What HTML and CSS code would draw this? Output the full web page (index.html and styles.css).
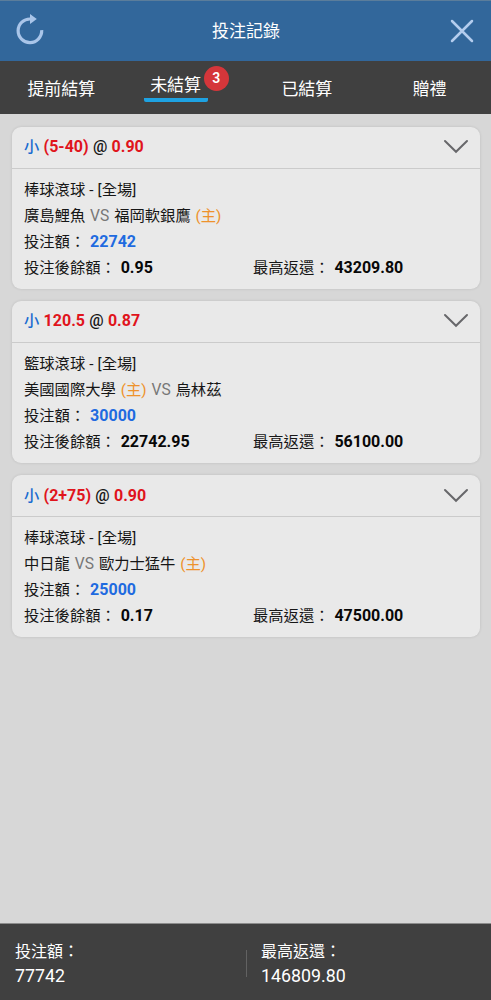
FILE: index.html
```html
<!DOCTYPE html>
<html lang="zh-Hant">
<head>
<meta charset="utf-8">
<title>投注記錄</title>
<link rel="stylesheet" href="styles.css">
</head>
<body>
<div class="app">
  <header class="topbar">
    <svg class="icon-refresh" width="30" height="32" viewBox="0 0 30 32"><path d="M26.7 16.2A11.8 11.8 0 1 1 15.5 5" fill="none" stroke="#a9c5e9" stroke-width="3.2"/><path d="M15 0L21.8 5L15 10Z" fill="#a9c5e9"/></svg>
    <h1 class="title">投注記錄</h1>
    <svg class="icon-close" width="24" height="24" viewBox="0 0 24 24"><path d="M2 2L22 22M22 2L2 22" fill="none" stroke="#b4cdee" stroke-width="2.5" stroke-linecap="round"/></svg>
  </header>
  <nav class="tabs">
    <div class="tab">提前結算</div>
    <div class="tab tab-active"><span class="tab-label">未結算</span><span class="badge">3</span></div>
    <div class="tab">已結算</div>
    <div class="tab">贈禮</div>
  </nav>
  <main class="list">
    <section class="card">
      <div class="card-head"><div class="pick"><span class="side">小</span> <b class="odds">(5-40)</b> <span class="at">@</span> <b class="odds">0.90</b></div>
        <svg width="26" height="16" viewBox="0 0 26 16"><path d="M2 2L13 12.8L24 2" class="chevron"/></svg></div>
      <div class="card-body">
        <div class="line league">棒球滾球 - [全場]</div>
        <div class="line">廣島鯉魚 <span class="vs">VS</span> 福岡軟銀鷹 <span class="home">(主)</span></div>
        <div class="line">投注額： <b class="stake">22742</b></div>
        <div class="line pair"><div>投注後餘額： <b>0.95</b></div><div>最高返還： <b>43209.80</b></div></div>
      </div>
    </section>
    <section class="card">
      <div class="card-head"><div class="pick"><span class="side">小</span> <b class="odds">120.5</b> <span class="at">@</span> <b class="odds">0.87</b></div>
        <svg width="26" height="16" viewBox="0 0 26 16"><path d="M2 2L13 12.8L24 2" class="chevron"/></svg></div>
      <div class="card-body">
        <div class="line league">籃球滾球 - [全場]</div>
        <div class="line">美國國際大學 <span class="home">(主)</span> <span class="vs">VS</span> 烏林茲</div>
        <div class="line">投注額： <b class="stake">30000</b></div>
        <div class="line pair"><div>投注後餘額： <b>22742.95</b></div><div>最高返還： <b>56100.00</b></div></div>
      </div>
    </section>
    <section class="card">
      <div class="card-head"><div class="pick"><span class="side">小</span> <b class="odds">(2+75)</b> <span class="at">@</span> <b class="odds">0.90</b></div>
        <svg width="26" height="16" viewBox="0 0 26 16"><path d="M2 2L13 12.8L24 2" class="chevron"/></svg></div>
      <div class="card-body">
        <div class="line league">棒球滾球 - [全場]</div>
        <div class="line">中日龍 <span class="vs">VS</span> 歐力士猛牛 <span class="home">(主)</span></div>
        <div class="line">投注額： <b class="stake">25000</b></div>
        <div class="line pair"><div>投注後餘額： <b>0.17</b></div><div>最高返還： <b>47500.00</b></div></div>
      </div>
    </section>
  </main>
  <footer class="summary">
    <div class="total"><div class="total-label">投注額：</div><div class="total-value">77742</div></div>
    <div class="divider"></div>
    <div class="total"><div class="total-label">最高返還：</div><div class="total-value">146809.80</div></div>
  </footer>
</div>
</body>
</html>
```
FILE: styles.css
```css
* { box-sizing: border-box; }
body { margin: 0; font-family: Roboto, "Noto Sans CJK TC", sans-serif; color: #161616; }
.app { height: 1000px; display: flex; flex-direction: column; background: #d7d7d7; overflow: hidden; }
.topbar { height: 61px; flex: none; display: flex; align-items: center; justify-content: space-between; padding: 0 17px 0 15px; background: #32679b; border-top: 1px solid #5b7d9b; }
.icon-refresh { margin-bottom: 2px; }
.title { margin: 0; font-size: 17px; font-weight: 400; color: #fff; padding: 0 3px 4px 0; }
.tabs { height: 53px; flex: none; display: grid; grid-template-columns: repeat(4, 1fr); background: #404040; color: #fff; font-size: 17px; }
.tab { display: flex; align-items: center; justify-content: center; }
.tab-active { position: relative; align-items: flex-start; padding: 7px 17px 0 0; }
.tab-label { height: 34px; line-height: 34px; padding: 0 6.5px; border-bottom: 4px solid #1ea2e2; border-radius: 2px; }
.badge { position: absolute; left: 81px; top: 5px; width: 25px; height: 25px; border-radius: 50%; background: #d5363a; font-size: 14px; font-weight: 600; line-height: 25px; text-align: center; }
.list { flex: 1; display: flex; flex-direction: column; gap: 12px; padding: 12.5px 11px 0 12px; }
.card { height: 162.2px; background: #e9e9e9; border-radius: 9px; box-shadow: 0 0 3px rgba(0,0,0,.12); font-size: 15.3px; }
.card-head { height: 42.5px; display: flex; align-items: center; justify-content: space-between; padding: 0 11px 0 12px; border-bottom: 1px solid #cbcbcb; font-size: 16px; white-space: nowrap; }
.pick { padding-bottom: 4px; word-spacing: .3px; }
.side { color: #1a6bd0; font-size: 15.3px; font-weight: 500; }
.at { font-weight: 500; }
.odds { color: #e0141c; }
.chevron { fill: none; stroke: #67676a; stroke-width: 2; stroke-linecap: round; }
.card-body { padding: 9px 12px 0; }
.line { height: 25.5px; line-height: 25.5px; white-space: nowrap; word-spacing: 1.1px; }
.league { word-spacing: .3px; }
.line b { font-size: 16px; color: #080808; }
.line .stake { color: #1f6be0; }
.vs { color: #777; font-size: 15.6px; }
.home { color: #ee922c; }
.pair { display: grid; grid-template-columns: 229px 1fr; }
.summary { height: 77px; flex: none; display: flex; padding: 16px 15px 0; background: #404040; border-top: 1px solid #8c8c8c; color: #fff; }
.total { width: 231px; flex: none; }
.total:last-child { width: 215px; }
.total-label { font-size: 16px; line-height: 24px; }
.total-value { font-size: 17.8px; line-height: 24px; }
.divider { width: 1px; flex: none; height: 27px; margin: 10px 14px 0 0; background: #626262; }
```
